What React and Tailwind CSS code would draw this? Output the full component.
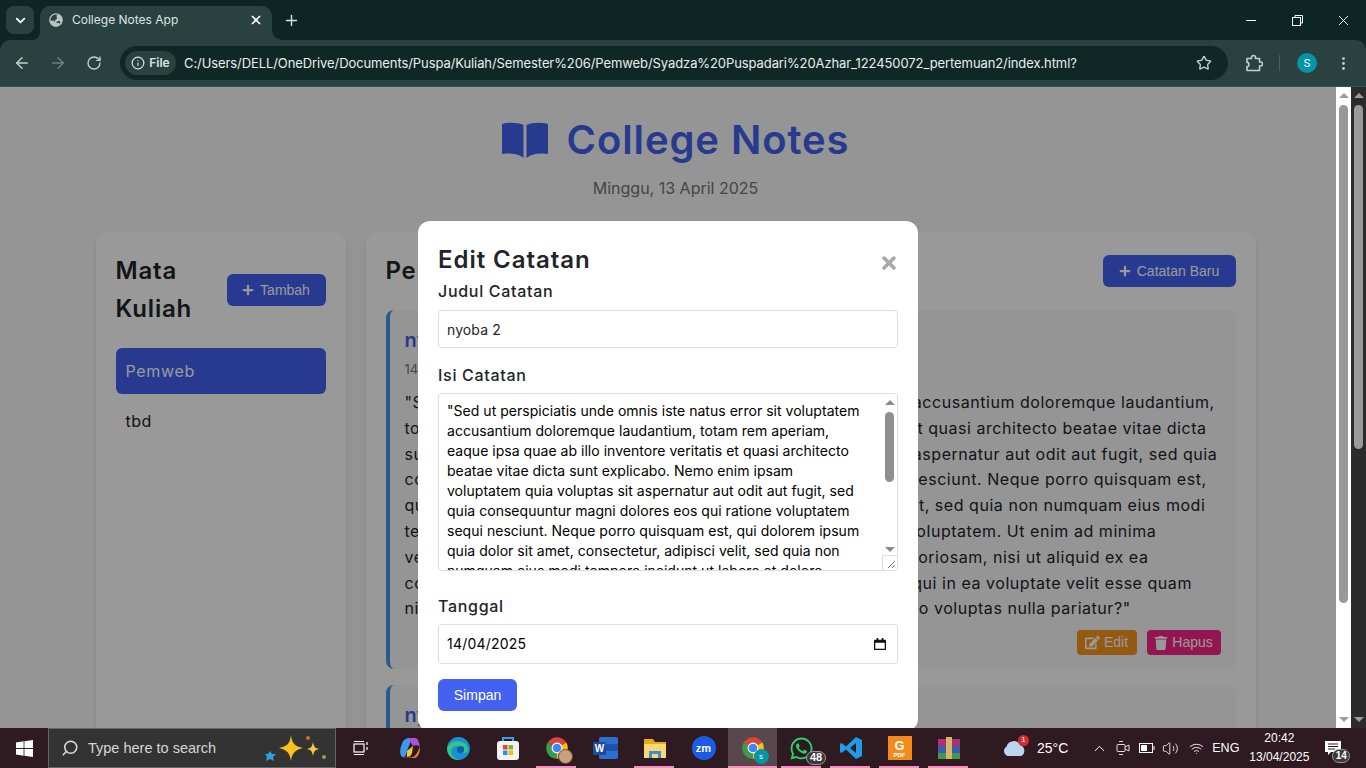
import { ArrowLeft, ArrowRight, RotateCw, Info, Star, MoreVertical, Plus, X, ChevronDown, ChevronUp, Search, Volume2, Wifi } from "lucide-react";
import { FaEdit, FaTrash, FaPlus, FaTimes, FaGlobeAsia, FaWhatsapp } from "react-icons/fa";

const noteLines = [
  "\"Sed ut perspiciatis unde omnis iste natus error sit voluptatem accusantium doloremque laudantium,",
  "totam rem aperiam, eaque ipsa quae ab illo inventore veritatis et quasi architecto beatae vitae dicta",
  "sunt explicabo. Nemo enim ipsam voluptatem quia voluptas sit aspernatur aut odit aut fugit, sed quia",
  "consequuntur magni dolores eos qui ratione voluptatem sequi nesciunt. Neque porro quisquam est,",
  "qui dolorem ipsum quia dolor sit amet, consectetur, adipisci velit, sed quia non numquam eius modi",
  "tempora incidunt ut labore et dolore magnam aliquam quaerat voluptatem. Ut enim ad minima",
  "veniam, quis nostrum exercitationem ullam corporis suscipit laboriosam, nisi ut aliquid ex ea",
  "commodi consequatur? Quis autem vel eum iure reprehenderit qui in ea voluptate velit esse quam",
  "nihil molestiae consequatur, vel illum qui dolorem eum fugiat quo voluptas nulla pariatur?\"",
];

const textareaLines = [
  "\"Sed ut perspiciatis unde omnis iste natus error sit voluptatem",
  "accusantium doloremque laudantium, totam rem aperiam,",
  "eaque ipsa quae ab illo inventore veritatis et quasi architecto",
  "beatae vitae dicta sunt explicabo. Nemo enim ipsam",
  "voluptatem quia voluptas sit aspernatur aut odit aut fugit, sed",
  "quia consequuntur magni dolores eos qui ratione voluptatem",
  "sequi nesciunt. Neque porro quisquam est, qui dolorem ipsum",
  "quia dolor sit amet, consectetur, adipisci velit, sed quia non",
  "numquam eius modi tempora incidunt ut labore et dolore",
];

function ChromeLogo({ size = 26 }) {
  return (
    <svg width={size} height={size} viewBox="0 0 48 48">
      <path d="M24 24L6.7 14A20 20 0 0 1 41.3 14Z" fill="#db4437" />
      <path d="M24 24L41.3 14A20 20 0 0 1 24 44Z" fill="#f4c20d" />
      <path d="M24 24L24 44A20 20 0 0 1 6.7 14Z" fill="#3c9a4c" />
      <circle cx="24" cy="24" r="10" fill="#fff" />
      <circle cx="24" cy="24" r="8" fill="#4285f4" />
    </svg>
  );
}

function WindowsLogo() {
  return (
    <svg width="17" height="17" viewBox="0 0 17 17" fill="#fff">
      <path d="M0 2.4L7.6 1.3V8H0Z" />
      <path d="M8.4 1.2L17 0V8H8.4Z" />
      <path d="M0 9H7.6V15.7L0 14.6Z" />
      <path d="M8.4 9H17V17L8.4 15.8Z" />
    </svg>
  );
}

function BookIcon() {
  return (
    <svg width="46" height="36" viewBox="0 0 46 36" fill="currentColor">
      <path d="M21.5 3C17 0.5 8 0 1.500 1.500 0.500 1.800 0 2.500 0 3.500V30.500C0 31.500 0.500 32 1.500 32 8 31 16 31.500 21.500 36Z" />
      <path d="M24.500 3C29 0.500 38 0 44.500 1.500 45.500 1.800 46 2.500 46 3.500V30.500C46 31.500 45.500 32 44.500 32 38 31 30 31.500 24.500 36Z" />
    </svg>
  );
}

function TaskItem({ children, running, active }) {
  return (
    <div className={`relative h-10 w-[49px] shrink-0 flex items-center justify-center ${active ? "bg-white/20" : ""}`}>
      {children}
      {running && <span className={`absolute bottom-0 h-[2px] bg-[#f58fbe] ${active ? "left-0 right-0" : "left-[4px] right-[5px]"}`} />}
    </div>
  );
}

function Scrollbar({ dark, thumb }) {
  return (
    <div className={`w-[15px] shrink-0 h-full flex flex-col items-center ${dark ? "bg-[#2b2b2b]" : "bg-white"}`}>
      <span className="mt-[6px] w-0 h-0 border-x-[5px] border-x-transparent border-b-[5px] border-b-[#9b9b9b]" />
      <span className={`mt-[7px] w-[9px] rounded-full bg-[#999] ${thumb}`} />
      <span className="mt-auto mb-[6px] w-0 h-0 border-x-[5px] border-x-transparent border-t-[5px] border-t-[#9b9b9b]" />
    </div>
  );
}

function BrowserBar() {
  return (
    <div className="shrink-0 bg-[#0d2624] text-[#dbe4e2]">
      <div className="relative h-10 flex items-start">
        <div className="mt-[6px] ml-[6px] w-7 h-7 rounded-lg bg-[#2a423f] flex items-center justify-center">
          <ChevronDown size={15} strokeWidth={3} className="text-white" />
        </div>
        <div className="relative mt-[6px] ml-[6px] w-[232px] h-[34px] rounded-t-[10px] bg-[#2a423f] flex items-center pl-[9px] pr-[9px] pb-[6px] text-xs">
          <span className="absolute right-full bottom-0 w-[8px] h-[8px] bg-[#2a423f]">
            <span className="block w-full h-full rounded-br-[8px] bg-[#0d2624]" />
          </span>
          <span className="absolute left-full bottom-0 w-[10px] h-[10px] bg-[#2a423f]">
            <span className="block w-full h-full rounded-bl-[10px] bg-[#0d2624]" />
          </span>
          <FaGlobeAsia size={14} className="text-[#b9c5c3]" />
          <span className="ml-[9px] flex-1">College Notes App</span>
          <X size={14} strokeWidth={3} className="text-white" />
        </div>
        <Plus size={17} strokeWidth={2} className="mt-[12px] ml-[11px] text-[#dbe4e2]" />
        <div className="ml-auto h-10 flex text-white">
          <div className="w-[46px] flex items-center justify-center"><span className="w-[10px] h-px bg-white" /></div>
          <div className="w-[46px] flex items-center justify-center">
            <svg width="11" height="11" viewBox="0 0 11 11" fill="none" stroke="#fff"><rect x="0.5" y="2.5" width="8" height="8" /><path d="M3 2.5V0.5H10.5V8H8.5" /></svg>
          </div>
          <div className="w-[46px] flex items-center justify-center"><X size={17} strokeWidth={1.3} /></div>
        </div>
      </div>
      <div className="relative h-[47px] rounded-t-[10px] bg-[#2a423f] border-b border-[#3d5350] flex items-center pl-[13px] pr-[14px]">
        <ArrowLeft size={18} className="text-[#c5d0ce]" />
        <ArrowRight size={18} className="ml-[18px] text-[#6d807d]" />
        <RotateCw size={16} className="ml-[19px] text-[#c5d0ce]" />
        <div className="ml-[18px] flex-1 h-[34px] rounded-full bg-[#102825] flex items-center pl-[5px] pr-[16px]">
          <div className="w-[51px] h-[24px] rounded-full bg-[#2a423f] flex items-center justify-center gap-[4px] text-xs font-semibold">
            <Info size={14} /> File
          </div>
          <span className="ml-[8px] mt-[1px] flex-1 text-[13px] tracking-[-0.09px] text-[#e8eeec]">C:/Users/DELL/OneDrive/Documents/Puspa/Kuliah/Semester%206/Pemweb/Syadza%20Puspadari%20Azhar_122450072_pertemuan2/index.html?</span>
          <Star size={16} className="text-[#c5d0ce]" />
        </div>
        <svg className="ml-[17px]" width="18" height="18" viewBox="0 0 18 18" fill="none" stroke="#c5d0ce" strokeWidth="1.6" strokeLinejoin="round">
          <path d="M2 4.500H6.500V3.500A2 2 0 0 1 10.500 3.500V4.500H14.500V8H15.500A2 2 0 0 1 15.500 12H14.500V16.500H2V12.500H3A2.500 2.500 0 0 0 3 8.500H2Z" />
        </svg>
        <span className="ml-[16px] w-px h-4 bg-[#4a605d]" />
        <span className="ml-[17px] w-5 h-5 rounded-full bg-[#0894a8] text-white text-[11px] flex items-center justify-center">S</span>
        <MoreVertical size={17} className="ml-[18px] text-[#c5d0ce]" />
      </div>
    </div>
  );
}

function NoteCard({ lines }) {
  return (
    <div className="rounded-lg border-l-4 border-[#4895ef] bg-[#f8f9fa] pl-[15px] pr-[15px] pt-[15px] pb-[14px]">
      <h3 className="text-[20px] leading-[30px] font-semibold text-[#4361ee]">nyoba 2</h3>
      <p className="mt-[4px] text-[13px] leading-[20px] text-[#6c757d]">14/04/2025</p>
      <div className="mt-[11px] text-[#212529] text-[16px] leading-[25.8px] tracking-[0.54px] whitespace-nowrap">
        {lines.map((l) => <div key={l}>{l}</div>)}
      </div>
      <div className="mt-[8px] flex justify-end gap-[10px] font-['Liberation_Sans',sans-serif] text-[14px] text-white">
        <span className="h-[25px] w-[60px] rounded bg-[#f8961e] flex items-center justify-center gap-[4px]"><FaEdit size={15} /> Edit</span>
        <span className="h-[25px] w-[74px] rounded bg-[#f72585] flex items-center justify-center gap-[4px]"><FaTrash size={14} /> Hapus</span>
      </div>
    </div>
  );
}

function PageBehind() {
  return (
    <div className="h-full bg-[#f8f9fa] overflow-hidden">
      <header className="pt-[26px] text-center">
        <h1 className="flex items-center justify-center gap-[19px] text-[40px] leading-[54px] font-semibold tracking-[0.9px] text-[#4361ee]">
          <BookIcon /> College Notes
        </h1>
        <p className="mt-[9px] text-[16px] leading-[24px] text-[#6c757d]">Minggu, 13 April 2025</p>
      </header>
      <div className="mx-auto mt-[32px] w-[1160px] flex gap-5">
        <aside className="w-[250px] h-[640px] shrink-0 rounded-xl bg-white shadow-[0_4px_6px_rgba(0,0,0,0.1)] p-5">
          <div className="flex items-center justify-between">
            <h2 className="w-[100px] text-[24px] leading-[38px] font-semibold tracking-[0.8px] text-[#212529]">Mata Kuliah</h2>
            <button className="h-8 w-[99px] rounded-md bg-[#4361ee] flex items-center justify-center gap-[6px] font-['Liberation_Sans',sans-serif] text-[14px] text-white">
              <FaPlus size={12} /> Tambah
            </button>
          </div>
          <div className="mt-[20px] h-[46px] rounded-md bg-[#4361ee] text-white text-[16px] tracking-[0.7px] flex items-center px-[10px]">Pemweb</div>
          <div className="mt-[4px] h-[46px] text-[#212529] text-[16px] tracking-[0.5px] flex items-center px-[10px]">tbd</div>
        </aside>
        <section className="w-[890px] rounded-xl bg-white shadow-[0_4px_6px_rgba(0,0,0,0.1)] p-5">
          <div className="flex items-center justify-between">
            <h2 className="text-[24px] leading-[38px] font-semibold tracking-[0.8px] text-[#212529]">Pertemuan</h2>
            <button className="h-8 w-[133px] rounded-md bg-[#4361ee] flex items-center justify-center gap-[6px] font-['Liberation_Sans',sans-serif] text-[14px] text-white">
              <FaPlus size={12} /> Catatan Baru
            </button>
          </div>
          <div className="mt-[20px] flex flex-col gap-4">
            <NoteCard lines={noteLines} />
            <NoteCard lines={noteLines} />
          </div>
        </section>
      </div>
    </div>
  );
}

function EditModal() {
  return (
    <div className="absolute inset-0 bg-black/40 flex">
      <div className="flex-1 flex justify-center overflow-hidden">
        <div className="mt-[134px] w-[500px] h-[510px] rounded-xl bg-white px-5 pt-[21px] text-[#212529]">
          <div className="flex items-center justify-between h-[36px]">
            <h2 className="text-[24px] leading-[36px] font-semibold tracking-[0.95px]">Edit Catatan</h2>
            <FaTimes size={20} className="mt-[5px] -mr-[1px] text-[#a8a8a8]" />
          </div>
          <label className="block text-[16px] leading-[24px] mt-[1px] font-medium tracking-[0.7px]">Judul Catatan</label>
          <input readOnly value="nyoba 2" className="mt-[7px] block w-full h-[38px] rounded border border-[#dddddd] px-2 text-[14px] tracking-[0.1px] text-[#212529] outline-none" />
          <label className="block text-[16px] leading-[24px] mt-[15px] font-medium tracking-[0.7px]">Isi Catatan</label>
          <div className="relative mt-[6px] h-[178px] rounded border border-[#dddddd] overflow-hidden">
            <div className="pl-2 pt-[7px] text-[14px] leading-[20px] tracking-[0.03px] whitespace-nowrap text-black">
              {textareaLines.map((l) => <div key={l}>{l}</div>)}
            </div>
            <div className="absolute top-0 right-0 bottom-[15px] w-[15px] bg-white flex flex-col items-center">
              <span className="mt-[6px] w-0 h-0 border-x-[5px] border-x-transparent border-b-[5px] border-b-[#8a8a8a]" />
              <span className="mt-[7px] w-[9px] h-[70px] rounded-full bg-[#8f8f8f]" />
              <span className="mt-auto mb-[3px] w-0 h-0 border-x-[5px] border-x-transparent border-t-[5px] border-t-[#8a8a8a]" />
            </div>
            <div className="absolute right-0 bottom-0 w-[15px] h-[15px] bg-white border-l border-t border-[#dddddd]">
              <svg width="14" height="14" viewBox="0 0 14 14" stroke="#777" fill="none"><path d="M12 5L5 12M12 9L9 12" /></svg>
            </div>
          </div>
          <label className="block text-[16px] leading-[24px] mt-[23px] font-medium tracking-[0.7px]">Tanggal</label>
          <div className="mt-[6px] h-[40px] rounded border border-[#dddddd] flex items-center justify-between pl-2 pr-[11px] text-[14px] tracking-[0.2px] text-black">
            <span className="-mt-[1px]">14/04/2025</span>
            <svg width="12" height="12" viewBox="0 0 14 14" fill="#111"><path d="M3 0h2v2h4V0h2v2h2a1 1 0 0 1 1 1v10a1 1 0 0 1-1 1H1a1 1 0 0 1-1-1V3a1 1 0 0 1 1-1h2zM1.500 5.500v7h11v-7z" /></svg>
          </div>
          <button className="mt-[15px] h-8 w-[79px] rounded-md bg-[#4361ee] font-['Liberation_Sans',sans-serif] text-[14px] text-white">Simpan</button>
        </div>
      </div>
      <Scrollbar thumb="h-[498px]" />
    </div>
  );
}

function Taskbar() {
  return (
    <div className="shrink-0 h-10 bg-[#301a22] flex items-center text-white font-['Liberation_Sans',sans-serif]">
      <div className="w-[48px] flex justify-center"><WindowsLogo /></div>
      <div className="w-[288px] h-full bg-[#333333] border border-[#666] flex items-center pl-[12px] pr-[8px]">
        <Search size={18} className="-scale-x-100 text-[#ddd]" />
        <span className="ml-[9px] mt-[2px] text-[14.5px] text-[#d6d6d6]">Type here to search</span>
        <svg className="ml-auto" width="62" height="30" viewBox="0 0 62 30">
          <path d="M26 2C27 11 30 13 38 15 30 17 27 20 26 28 25 20 22 17 14 15 22 13 25 11 26 2Z" fill="#f8c11c" />
          <path d="M48 9C49 14 50 15 54 16 50 17 49 18 48 23 47 18 46 17 42 16 46 15 47 14 48 9Z" fill="#f6c542" />
          <circle cx="43" cy="5" r="2" fill="#e0642c" />
          <circle cx="59" cy="24" r="2" fill="#7fb13b" />
          <path d="M5 18L7 21 11 21 8 24 9 28 5 26 1 28 2 24 0 21 3 21Z" fill="#2b9fe8" />
        </svg>
      </div>
      <div className="w-[49px] flex justify-center">
        <svg width="16" height="16" viewBox="0 0 16 16" fill="none" stroke="#fff" strokeWidth="1.2"><rect x="1" y="4" width="10" height="8" /><path d="M1 1.5H11M1 14.5H11M14 2V5M14 7V10" /></svg>
      </div>
      <TaskItem>
        <svg width="24" height="24" viewBox="0 0 24 24">
          <path d="M4 8C5 3 9 2 12 2H14L9 15C8 20 7 21 5 21 2 21 1 14 4 8Z" fill="#3a9af0" />
          <path d="M10 2H17C20 2 21 6 22 11 20 9 17 9 15 10Z" fill="#b04fd8" />
          <path d="M3 21C6 22 12 22 15 21 18 20 20 15 22 11 22 17 20 22 16 22H7Z" fill="#f27a3a" />
          <path d="M9 15L15 10 14 17C13 20 11 21 9 21Z" fill="#f0c83c" />
        </svg>
      </TaskItem>
      <TaskItem>
        <svg width="25" height="25" viewBox="0 0 24 24">
          <circle cx="12" cy="12" r="11" fill="#1a8fd6" />
          <path d="M1 12C3 5 12 3 18 7 22 10 22 15 19 16 15 17 12 15 15 12 12 8 6 9 5 14 4 19 9 22 13 23 6 24 1 18 1 12Z" fill="#2fc77e" />
          <circle cx="14" cy="13" r="3.5" fill="#0f5fa8" />
        </svg>
      </TaskItem>
      <TaskItem>
        <svg width="24" height="26" viewBox="0 0 24 26">
          <path d="M7 7V3H17V7" fill="none" stroke="#2ba5e8" strokeWidth="2" />
          <rect x="1" y="6" width="22" height="19" rx="3" fill="#f2f2f2" />
          <rect x="7" y="10" width="4.5" height="4.5" fill="#e8442c" />
          <rect x="12.5" y="10" width="4.5" height="4.5" fill="#7ab82c" />
          <rect x="7" y="15.5" width="4.5" height="4.5" fill="#1a9be8" />
          <rect x="12.5" y="15.5" width="4.5" height="4.5" fill="#f8b81c" />
        </svg>
      </TaskItem>
      <TaskItem running>
        <div className="relative">
          <ChromeLogo />
          <span className="absolute -right-[3px] -bottom-[3px] w-[15px] h-[15px] rounded-full bg-[#c8a080] border border-[#6b4a33]" />
        </div>
      </TaskItem>
      <TaskItem>
        <svg width="26" height="24" viewBox="0 0 26 24">
          <rect x="6" y="1" width="19" height="22" rx="2" fill="#2b6fd0" />
          <rect x="6" y="8" width="19" height="7" fill="#1d54a8" />
          <rect x="0" y="6" width="13" height="13" rx="1" fill="#1a4c9c" />
          <text x="6.5" y="16" textAnchor="middle" fontSize="10" fontWeight="bold" fill="#fff">W</text>
        </svg>
      </TaskItem>
      <TaskItem running>
        <svg width="24" height="22" viewBox="0 0 24 22">
          <path d="M1 2H10L12 5H23V20H1Z" fill="#e8a91c" />
          <rect x="1" y="7" width="22" height="14" fill="#f9d771" />
          <path d="M6 21V14H18V21H15V17H9V21Z" fill="#3b8fd8" />
        </svg>
      </TaskItem>
      <TaskItem>
        <span className="w-6 h-6 rounded-full bg-[#1a5ce8] flex items-center justify-center text-[11px] font-bold">zm</span>
      </TaskItem>
      <TaskItem running active>
        <div className="relative">
          <ChromeLogo />
          <span className="absolute -right-[3px] -bottom-[3px] w-[15px] h-[15px] rounded-full bg-[#0894a8] text-[8px] flex items-center justify-center">s</span>
        </div>
      </TaskItem>
      <TaskItem running>
        <div className="relative">
          <FaWhatsapp size={25} className="text-[#25d366]" />
          <span className="absolute -right-[12px] bottom-[-4px] w-[20px] h-[14px] rounded-full bg-[#3a3a3a] border border-[#999] text-[11px] font-bold leading-none flex items-center justify-center">48</span>
        </div>
      </TaskItem>
      <TaskItem running>
        <svg width="24" height="24" viewBox="0 0 24 24">
          <path d="M17 1L23 4V20L17 23 7 13.5 2.5 17 1 16V8L2.5 7 7 10.5ZM17 7L11 12 17 17Z" fill="#1f9ce8" fillRule="evenodd" />
        </svg>
      </TaskItem>
      <TaskItem running>
        <div className="relative w-6 h-6 bg-[#f28a1c] flex flex-col items-center justify-center">
          <span className="text-[13px] font-bold leading-none">G</span>
          <span className="text-[6px] font-bold leading-none">PDF</span>
        </div>
      </TaskItem>
      <TaskItem running>
        <svg width="24" height="24" viewBox="0 0 24 24">
          <rect x="1" y="3" width="22" height="7" fill="#a83274" />
          <rect x="1" y="10" width="22" height="7" fill="#3a5bb0" />
          <rect x="1" y="17" width="22" height="6" fill="#3f9a4a" />
          <rect x="9" y="1" width="6" height="22" fill="#d9b36a" />
        </svg>
      </TaskItem>
      <div className="ml-[28px] relative w-[26px] flex justify-center">
        <svg width="26" height="17" viewBox="0 0 24 16"><path d="M6 15A5 5 0 0 1 5 6 7 7 0 0 1 18 5 5.500 5.500 0 0 1 19 15Z" fill="#bcd6f2" /></svg>
        <span className="absolute -top-[5px] right-[-2px] w-[11px] h-[11px] rounded-full bg-[#d02c2c] text-[8px] flex items-center justify-center">1</span>
      </div>
      <span className="ml-[10px] text-[14px]">25°C</span>
      <ChevronUp size={17} strokeWidth={1.4} className="ml-[23px]" />
      <svg className="ml-[8px]" width="14" height="18" viewBox="0 0 14 18" fill="none" stroke="#ddd"><rect x="1" y="5.500" width="8" height="7" rx="1" /><path d="M9 8L13 6V12L9 10M3 2.500H7M3 15.500H7" /></svg>
      <svg className="ml-[9px]" width="16" height="10" viewBox="0 0 16 10" fill="none" stroke="#fff"><rect x="0.500" y="0.500" width="13" height="9" /><rect x="2" y="2" width="6" height="6" fill="#fff" stroke="none" /><path d="M15 3V7" /></svg>
      <Volume2 size={17} strokeWidth={1.2} className="ml-[7px]" />
      <Wifi size={15} strokeWidth={1.4} className="ml-[10px]" />
      <span className="ml-[8px] text-[12.5px]">ENG</span>
      <div className="ml-[9px] w-[62px] text-center text-[12px] leading-[19px] shrink-0">
        <div>20:42</div>
        <div className="whitespace-nowrap">13/04/2025</div>
      </div>
      <div className="relative ml-[15px]">
        <svg width="16" height="15" viewBox="0 0 16 15" fill="#fff"><path d="M0 0H16V11H6L3 14V11H0Z" /><path d="M3 3H13M3 5.500H13M3 8H10" stroke="#301a22" /></svg>
        <span className="absolute -right-[9px] -bottom-[7px] w-[18px] h-[14px] rounded-full bg-[#3a3a3a] border border-[#999] text-[10px] font-bold flex items-center justify-center">14</span>
      </div>
    </div>
  );
}

export default function App() {
  return (
    <div className="w-screen h-screen overflow-hidden flex flex-col font-['Inter','Noto_Sans',sans-serif]">
      <BrowserBar />
      <div className="flex-1 min-h-0 flex">
        <div className="relative w-[1351px] shrink-0 overflow-hidden">
          <PageBehind />
          <EditModal />
        </div>
        <Scrollbar dark thumb="h-[344px]" />
      </div>
      <Taskbar />
    </div>
  );
}
